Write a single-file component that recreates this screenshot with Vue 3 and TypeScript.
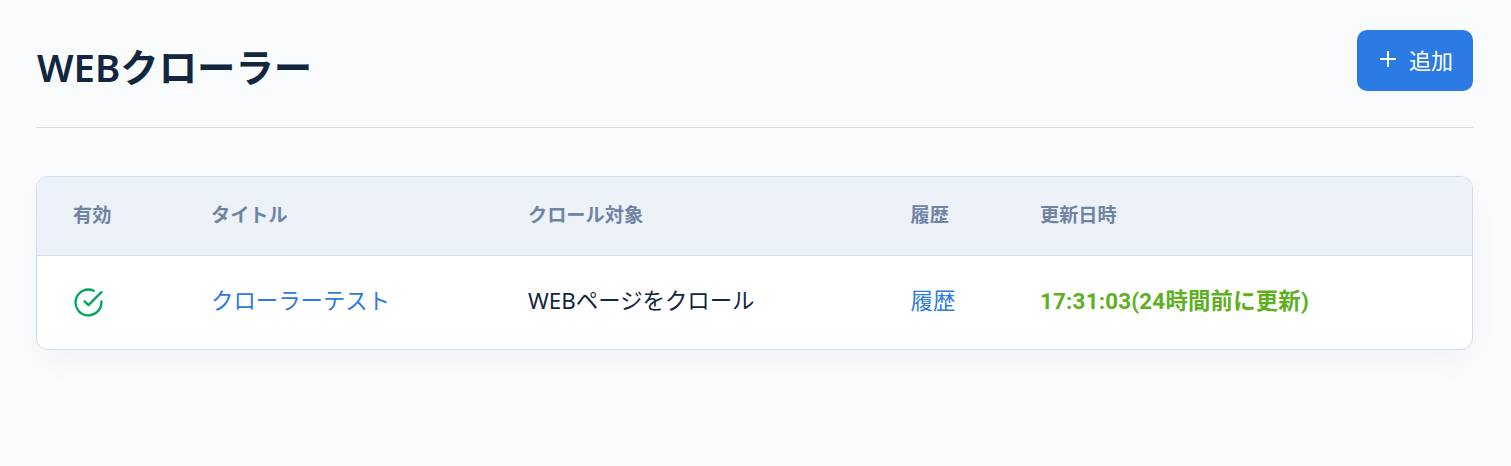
<template>
  <div class="page">
    <header class="page_header">
      <h1 class="page_title">WEBクローラー</h1>
      <button class="add_button" type="button">
        <svg class="add_icon" viewBox="0 0 16 16" fill="none">
          <path d="M8 0v16M0 8h16" stroke="currentColor" stroke-width="2" />
        </svg>
        <span>追加</span>
      </button>
    </header>

    <div class="card">
      <div class="row head">
        <div v-for="col in columns" :key="col">{{ col }}</div>
      </div>
      <div class="row body" v-for="crawler in crawlers" :key="crawler.id">
        <div>
          <svg v-if="crawler.enabled" class="check_icon" viewBox="0 0 24 24" fill="none">
            <path d="M22 11.08V12a10 10 0 1 1-5.93-9.14" stroke="currentColor" stroke-width="1.8" stroke-linecap="round" stroke-linejoin="round" />
            <path d="M22 4 12 14.01l-3-3" stroke="currentColor" stroke-width="1.8" stroke-linecap="round" stroke-linejoin="round" />
          </svg>
        </div>
        <div><a class="link">{{ crawler.title }}</a></div>
        <div>{{ crawler.target }}</div>
        <div><a class="link">履歴</a></div>
        <div class="updated">{{ crawler.updated }}</div>
      </div>
    </div>
  </div>
</template>

<script setup lang="ts">
interface Crawler {
  id: number;
  enabled: boolean;
  title: string;
  target: string;
  updated: string;
}

const columns = ['有効', 'タイトル', 'クロール対象', '履歴', '更新日時'];

const crawlers: Crawler[] = [
  {
    id: 1,
    enabled: true,
    title: 'クローラーテスト',
    target: 'WEBページをクロール',
    updated: '17:31:03(24時間前に更新)',
  },
];
</script>

<style>
html,
body {
  background: #f9fbfd;
}
</style>

<style scoped>
.page {
  min-height: 466px;
  box-sizing: border-box;
  padding: 30px 38px 0 36px;
  font-family: "Noto Sans", "Noto Sans CJK JP", sans-serif;
  background: #f9fbfd;
}

.page_header {
  display: flex;
  justify-content: space-between;
  align-items: flex-start;
  height: 97px;
  border-bottom: 1px solid #d6dfe9;
  margin-bottom: 48px;
}

.page_title {
  margin: 0;
  padding: 7px 0 0 1px;
  font-size: 38.4px;
  line-height: 60px;
  font-weight: 600;
  color: #12263f;
}

.add_button {
  display: flex;
  align-items: center;
  gap: 13px;
  width: 116px;
  height: 61px;
  padding: 0 0 3px 23px;
  border: 0;
  border-radius: 10px;
  background: #2c7be5;
  color: #fff;
  font: 400 22px "Noto Sans", "Noto Sans CJK JP", sans-serif;
}

.add_icon {
  width: 16px;
  height: 16px;
}

.card {
  border: 1px solid #d2ddec;
  border-radius: 12px;
  overflow: hidden;
  background: #fff;
  box-shadow: 0 12px 32px rgba(18, 38, 63, 0.035);
}

.row {
  display: grid;
  grid-template-columns: 138px 317px 382.5px 129.5px 1fr;
  align-items: center;
  padding: 0 36px;
}

.head {
  height: 79px;
  padding-bottom: 4px;
  box-sizing: border-box;
  background: #edf2f9;
  border-bottom: 1px solid #d2ddec;
  font-size: 19.2px;
  font-weight: 700;
  color: #6e84a3;
}

.body {
  height: 93px;
  padding-bottom: 7px;
  box-sizing: border-box;
  font-size: 22.4px;
  color: #12263f;
}

.link {
  color: #2c7be5;
}

.check_icon {
  display: block;
  width: 31px;
  height: 31px;
  margin: 6.6px 0 0 -0.5px;
  color: #00a65a;
}

.updated {
  font-family: Roboto, "Noto Sans CJK JP", sans-serif;
  font-weight: 700;
  letter-spacing: 0.2px;
  color: #5eb01f;
}
</style>
